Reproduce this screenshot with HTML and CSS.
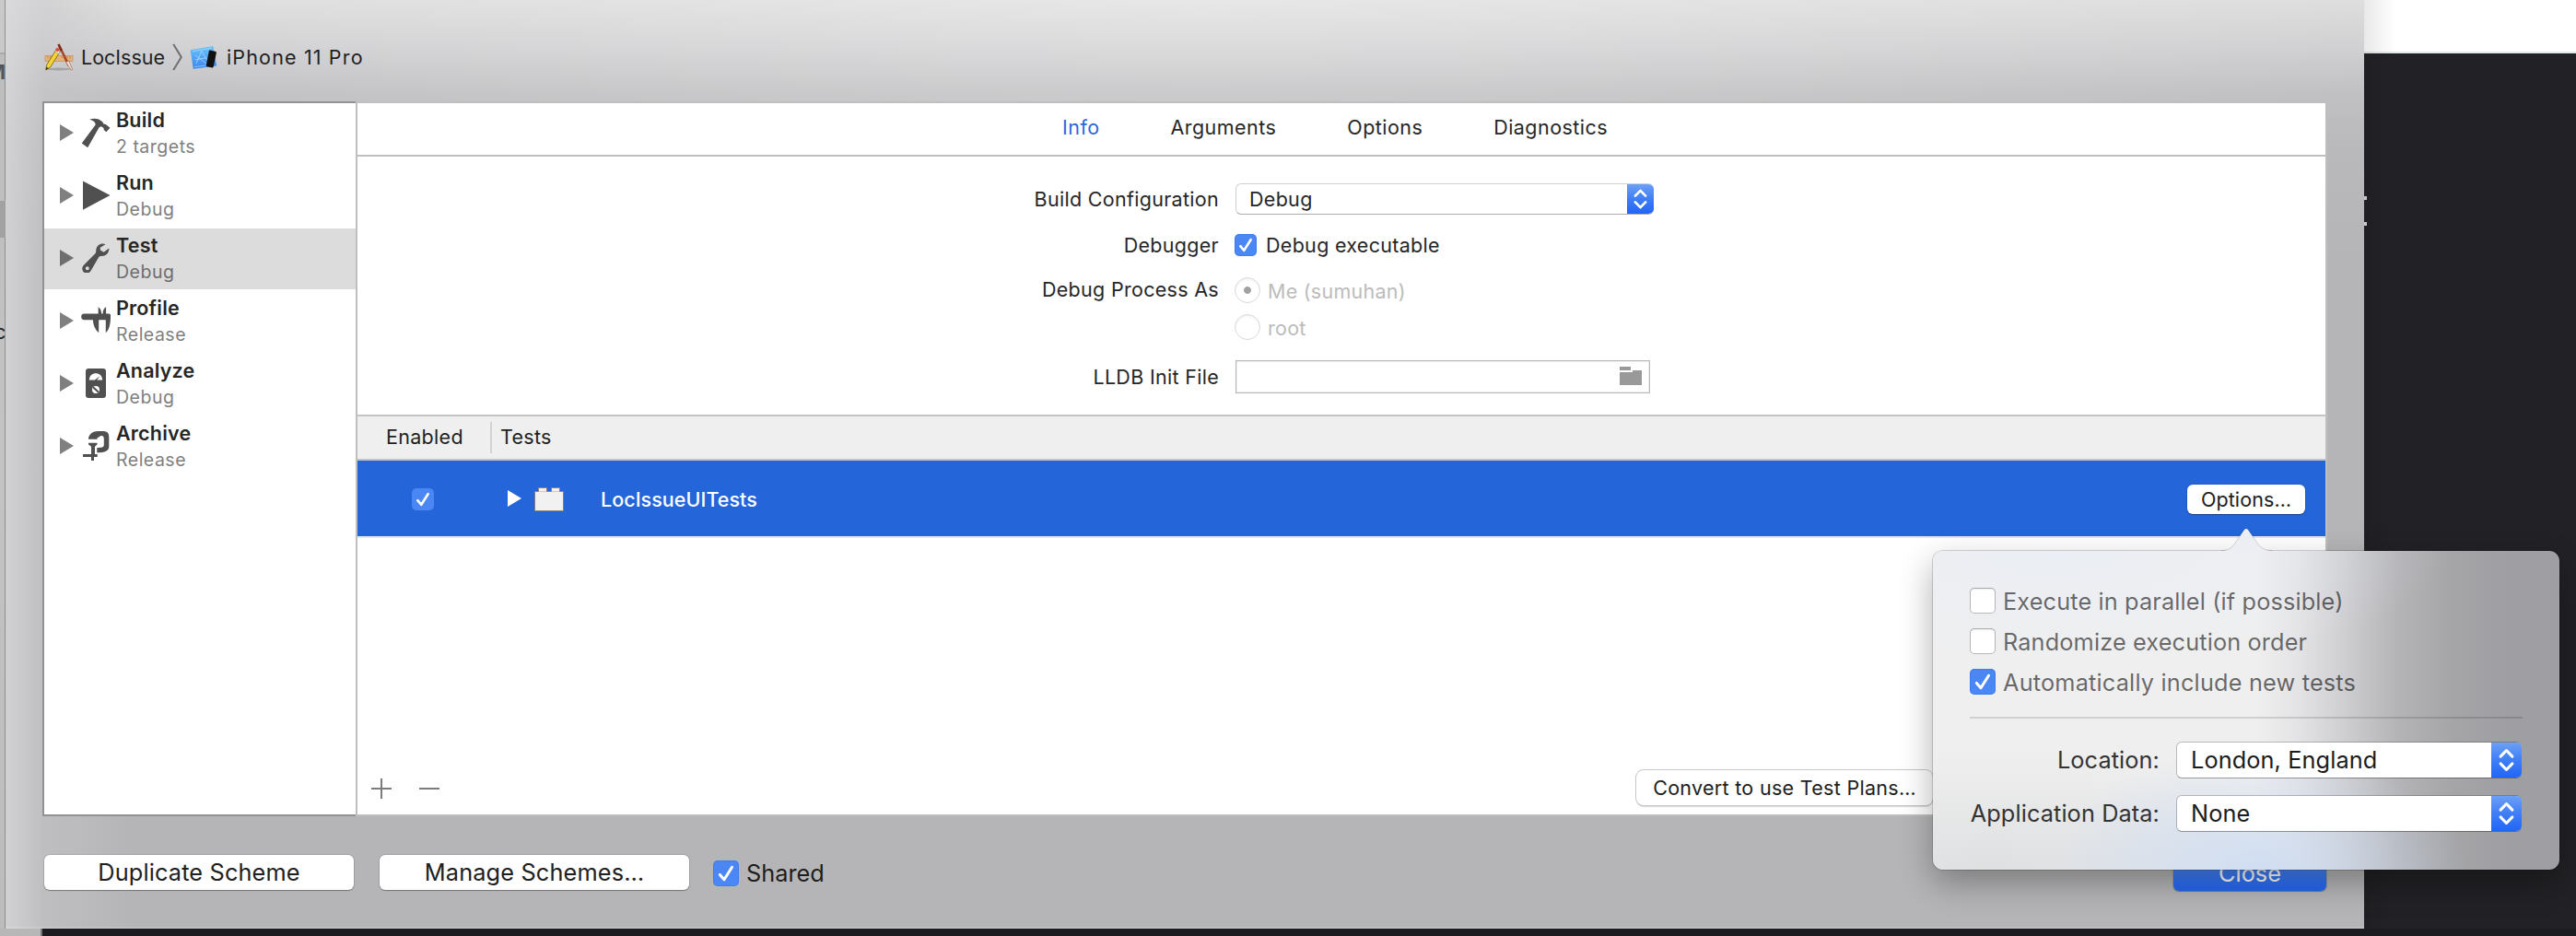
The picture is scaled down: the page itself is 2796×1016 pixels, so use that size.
FILE: index.html
```html
<!DOCTYPE html>
<html lang="en">
<head>
<meta charset="utf-8">
<title>Scheme editor</title>
<link rel="stylesheet" href="styles.css">
</head>
<body>
<svg class="defs" aria-hidden="true">
  <defs>
    <linearGradient id="blueprint" x1="0" y1="0" x2="0" y2="1"><stop offset="0" stop-color="#6cc4fb"/><stop offset="1" stop-color="#3a84ee"/></linearGradient>
  </defs>
  <symbol id="check" viewBox="0 0 24 24"><path d="M6.3 13.2l4 4.6L17.6 6.2" fill="none" stroke="#fff" stroke-width="2.6" stroke-linecap="round" stroke-linejoin="round"/></symbol>
  <symbol id="steppers" viewBox="0 0 30 34"><path d="M9.2 13.5l5.8-6 5.8 6M9.2 20.500l5.800 6 5.800-6" fill="none" stroke="#fff" stroke-width="2.800" stroke-linecap="round" stroke-linejoin="round"/></symbol>
  <symbol id="tri" viewBox="0 0 15 18"><path d="M0 0l15 9-15 9z" fill="currentColor"/></symbol>
</svg>

<div class="desktop">
  <aside class="behind-left"><span class="clip-m">M</span><i class="clip-band"></i><span class="clip-c">c</span></aside>

  <main class="sheet">
    <header class="crumbs">
      <svg class="app-icon" width="32" height="32" viewBox="0 0 32 32">
        <ellipse cx="16" cy="29" rx="13" ry="1.500" fill="#000" opacity=".18"/>
        <rect x="1" y="14.500" width="30" height="6" fill="#e6b277" stroke="#bd8a55" stroke-width=".6"/>
        <path d="M4 15v2M7 15v3M10 15v2M13 15v3M19 15v2M22 15v3M25 15v2M28 15v3" stroke="#a8743f" stroke-width=".6"/>
        <path d="M14.500 2.500l2-.9L28 24.500l-2.600 1.300z" fill="#a8452a"/>
        <path d="M14.500 2.500l2-.9 3.400 6.800-2.600 1.300z" fill="#7d3019"/>
        <path d="M23.500 21.500l3.200-1.500 4 9.500-1.600.6z" fill="#f3ddcf" stroke="#9a6a55" stroke-width=".7"/>
        <path d="M13.200 7.500l4 2.300L6.600 27 1.800 30l.6-5z" fill="#f5d432" stroke="#7c6a1d" stroke-width=".9"/>
        <path d="M13.200 7.500l4 2.300-1.500 2.500-4-2.300z" fill="#f4efe9" stroke="#888" stroke-width=".5"/>
        <circle cx="14.300" cy="8" r="1.900" fill="#e2483a"/>
        <path d="M2.300 26.500L1.800 30l3-1.800z" fill="#3b3422"/>
      </svg>
      <span class="crumb">LocIssue</span>
      <svg class="crumb-sep" width="12" height="30" viewBox="0 0 12 30"><path d="M1.200 1l8.600 14-8.600 14" fill="none" stroke="#6f6f71" stroke-width="2"/></svg>
      <svg class="sim-icon" width="30" height="27" viewBox="0 0 30 27">
        <path d="M.6 5.200L25.400 1l3.800 21.500L3.800 25.800z" fill="url(#blueprint)"/>
        <path d="M2.800 6.700L23.600 3.200M5 23.600l16-2M13 6L6.800 20.500M12.500 6.500l7.500 11M6.200 15.700l12.300-1.900M6 11l12 9" fill="none" stroke="#b9e1ff" stroke-width=".8" opacity=".8"/>
        <path d="M20.800 6.400q.3-1 1.300-.8l6 1.300q1 .3.800 1.200l-3.200 15.500q-.3 1-1.300.8l-5.800-1.200q-1-.3-.8-1.200z" fill="#111"/>
      </svg>
      <span class="crumb device">iPhone 11 Pro</span>
    </header>

    <div class="panes">
      <nav class="actions">
        <div class="action"><svg class="tri"><use href="#tri"/></svg>
          <svg class="glyph" viewBox="0 0 32 32"><path d="M9.200 1.800C14 -.3 19.500.5 23 4l1.500 2.600 2.300.3 4.700 3.900-4.200 4.400-2.600-2.300-.2-2-2.600-1.700-2.300 1L7.200 32.200.8 27.500 15.600 7.600C15.800 4.500 13 2.800 9.200 1.800z"/></svg>
          <div><b>Build</b><small>2 targets</small></div></div>
        <div class="action"><svg class="tri"><use href="#tri"/></svg>
          <svg class="glyph" viewBox="0 0 32 32"><path d="M2 .5L31.500 16 2 31.800z"/></svg>
          <div><b>Run</b><small>Debug</small></div></div>
        <div class="action selected"><svg class="tri"><use href="#tri"/></svg>
          <svg class="glyph" viewBox="0 0 32 32"><path fill-rule="evenodd" d="M26.500 1.200C22 -.8 16.800 2.200 16.300 7.200c-.1 1.500 0 2.600-.7 3.700L3.200 23.600a5 5 0 1 0 7.500 6.200L19 15.600c.7-1.200 1.800-1.500 3.200-1.500 4.800-.1 8.500-3.900 8.200-8.600l-5.900 4.200-3.600-2.200-.2-2.800zM6.800 25.200a2 2 0 1 1 0 4 2 2 0 0 1 0-4z"/></svg>
          <div><b>Test</b><small>Debug</small></div></div>
        <div class="action"><svg class="tri"><use href="#tri"/></svg>
          <svg class="glyph" viewBox="0 0 32 32"><path d="M3.500 8.500h15.200V1.300C21.200 3 22 5.500 22.100 8.500h1.500c0-3 .9-5.800 3.500-7.200v7.200h3.400q1.500 0 1.500 1.800c.2 9-1.500 16-5.200 19V15.200h-7.600v14C15.300 26 13.200 21 12.800 15.200H3.500a3.300 3.300 0 0 1 0-6.700z"/></svg>
          <div><b>Profile</b><small>Release</small></div></div>
        <div class="action"><svg class="tri"><use href="#tri"/></svg>
          <svg class="glyph" viewBox="0 0 32 32"><rect x="5" y="0" width="22" height="32" rx="3.200"/><path d="M8.800 12.600C9 2.800 23 2.800 23.200 12.600h-6l3.200-4.400-5.500 4.400z" fill="#fff"/><circle cx="16" cy="23" r="4" fill="#fff"/><path d="M13 20.200l6 5.600" stroke="#505050" stroke-width="2"/></svg>
          <div><b>Analyze</b><small>Debug</small></div></div>
        <div class="action"><svg class="tri"><use href="#tri"/></svg>
          <svg class="glyph" viewBox="0 0 32 32"><path d="M8 7.500C9 3 13 0 18 0h6.500Q30.300 0 30.300 6v10.500c0 5-4.300 6.800-13 6.800V18c5 0 7.500-.6 7.500-3V8.500Q24.800 4.500 21 5.200l-3.500 2.300v1.300H8zM8 12.800h9.500v1.700l-2.500 2.300V25h2.700v3H14v4h-3v-4H2v-3h9v-8.200L8 14.500z"/></svg>
          <div><b>Archive</b><small>Release</small></div></div>
      </nav>

      <section class="detail">
        <div class="tabs"><span class="on">Info</span><span>Arguments</span><span>Options</span><span>Diagnostics</span></div>

        <div class="form">
          <div class="row r1"><label>Build Configuration</label><div class="popup"><span>Debug</span><svg viewBox="0 0 30 34"><use href="#steppers"/></svg></div></div>
          <div class="row r2"><label>Debugger</label><i class="box checked"><svg viewBox="0 0 24 24"><use href="#check"/></svg></i><span class="opt">Debug executable</span></div>
          <div class="row r3"><label>Debug Process As</label><i class="radio dot"></i><span class="opt dim">Me (sumuhan)</span></div>
          <div class="row r4"><label></label><i class="radio"></i><span class="opt dim">root</span></div>
          <div class="row r5"><label>LLDB Init File</label><div class="field"><svg width="24" height="20" viewBox="0 0 24 20"><path d="M0 0h12v4H0zM14 4h10v16H0V6h14z" fill="#999"/></svg></div></div>
        </div>

        <div class="thead"><span class="c1">Enabled</span><span class="c2">Tests</span></div>
        <div class="test">
          <i class="box checked soft"><svg viewBox="0 0 24 24"><use href="#check"/></svg></i>
          <svg class="tri"><use href="#tri"/></svg>
          <svg class="brick" width="32" height="26" viewBox="0 0 32 26"><path d="M.5 25.500v-21h4v-4h9v4h5v-4h9v4h4v21z" fill="#f1f1f1" stroke="#8b8178"/><path d="M5 4.500h8M19 4.500h8" stroke="#ccc"/></svg>
          <span class="name">LocIssueUITests</span>
          <button class="push mini">Options…</button>
        </div>

        <div class="tools">
          <svg width="80" height="24" viewBox="0 0 80 24"><path d="M0 12h22M11 1v22M52 12h22" stroke="#7c7c7c" stroke-width="2"/></svg>
          <button class="push outline">Convert to use Test Plans…</button>
        </div>
      </section>
    </div>

    <footer class="foot">
      <button class="push wide">Duplicate Scheme</button>
      <button class="push wide">Manage Schemes…</button>
      <i class="box checked big"><svg viewBox="0 0 24 24"><use href="#check"/></svg></i><span class="shared">Shared</span>
      <button class="push close">Close</button>
    </footer>
  </main>

  <aside class="behind-right"><i class="speck"></i><i class="speck"></i></aside>
</div>
<div class="below"></div>

<div class="popover">
  <svg class="arrow" width="56" height="26" viewBox="0 0 56 26"><path d="M0 25C9 25 12 21 16 15L24.500 2.500Q27 -.8 29.500 2.500L38 15c4 6 8 10 17 10v1H0z" fill="#eceef3"/><path d="M0 24.500C9 24.500 12 21 16 15L24.500 2.500Q27 -.8 29.500 2.500L38 15c4 6 8 9.500 17 9.500" fill="none" stroke="#000" stroke-opacity=".15"/></svg>
  <div class="line"><i class="box big"></i><span>Execute in parallel (if possible)</span></div>
  <div class="line"><i class="box big"></i><span>Randomize execution order</span></div>
  <div class="line"><i class="box checked big"><svg viewBox="0 0 24 24"><use href="#check"/></svg></i><span class="auto">Automatically include new tests</span></div>
  <hr>
  <div class="pick"><label>Location:</label><div class="popup large"><span>London, England</span><svg viewBox="0 0 30 34"><use href="#steppers"/></svg></div></div>
  <div class="pick"><label>Application Data:</label><div class="popup large"><span>None</span><svg viewBox="0 0 30 34"><use href="#steppers"/></svg></div></div>
</div>
</body>
</html>
```
FILE: styles.css
```css
* { box-sizing: border-box; }
body {
  margin: 0;
  width: 2796px;
  height: 1016px;
  overflow: hidden;
  position: relative;
  font: 400 21.5px/30px Inter, "Liberation Sans", sans-serif;
  letter-spacing: .3px;
  color: #262626;
  background: #222125;
  white-space: nowrap;
}
.defs { position: absolute; width: 0; height: 0; }
i { display: block; flex: none; }
svg { display: block; flex: none; }

.desktop { display: flex; height: 1008px; }

/* slivers of the windows behind the sheet */
.behind-left {
  width: 6px;
  overflow: hidden;
  display: flex;
  flex-direction: column;
  background: linear-gradient(#c9c9c9 0 57px, #aaa 57px 59px, #bdbdbd 59px, #c3c3c3 500px, #bcbcbc);
  box-shadow: inset -1px 0 #8f8f8f;
}
.clip-m { height: 30px; margin: 63px 0 0 -14px; font-weight: 700; color: #555; }
.clip-band { height: 40px; margin-top: 125px; background: #a2a2a2; }
.clip-c { height: 30px; margin: 87px 0 0 -6px; color: #222; }
.behind-right {
  flex: 1;
  background:
    linear-gradient(90deg, rgba(0,0,0,.09), rgba(0,0,0,0) 34px),
    linear-gradient(#fff 0 56px, #e5e8e8 56px 58px, #222125 58px);
}
.speck { width: 3px; height: 4px; margin-top: 213px; background: #c8c8ca; }
.speck + .speck { margin-top: 24px; }
.below { height: 8px; background: linear-gradient(90deg, #b7b7b7 0 44px, #777 44px 46px, #1c1b1f 46px); }

.sheet {
  width: 2560px;
  display: flex;
  flex-direction: column;
  background:
    linear-gradient(90deg, rgba(216,216,218,.8), rgba(200,200,203,.5) 42px, rgba(190,190,192,0) 140px),
    radial-gradient(ellipse 1400px 220px at 1300px 0, rgba(255,255,255,.3), rgba(255,255,255,0)),
    linear-gradient(#dddddd, #d0d0d2 50px, #c1c1c3 100px, #b9b9bb 160px, #b5b5b7 300px, #b5b5b7);
  box-shadow: inset 0 -2px rgba(255,255,255,.14);
}

.crumbs { height: 110px; padding: 46px 0 0 42px; display: flex; align-items: flex-start; }
.crumb { margin: 1px 0 0 8px; width: 91px; letter-spacing: 0; color: #1f1f1f; }
.crumb-sep { margin: 1px 0 0 8px; }
.sim-icon { margin: 3px 0 0 7px; }
.crumb.device { margin-left: 10px; width: auto; letter-spacing: 1.150px; }

.panes { display: flex; height: 776px; margin-left: 40px; width: 2480px; }
.actions {
  width: 340px;
  background: #fff;
  border: 2px solid #929294;
  border-right: 0;
}
.action { display: flex; height: 66px; margin-bottom: 2px; padding: 4px 0 0 17px; color: #262626; }
.action .glyph { width: 32px; height: 32px; margin: 12px 6px 0 8px; fill: #505050; }
.action .tri { margin-top: 19px; color: #808080; }
.tri { width: 15px; height: 18px; }
.action b, .action small { display: block; line-height: 28px; height: 28px; }
.action b { font-weight: 600; letter-spacing: .2px; }
.action small { margin-top: 1px; font-size: 19.500px; letter-spacing: .5px; color: #808080; }
.action.selected { background: #dcdcdc; }
.action.selected .tri, .action.selected small { color: #6e6e6e; }

.detail {
  flex: 1;
  display: flex;
  flex-direction: column;
  background: #fff;
  border: 2px solid #bfbfbf;
}
.tabs { height: 58px; border-bottom: 2px solid #bfbfbf; display: flex; gap: 77px; padding: 11px 0 0 765px; letter-spacing: .450px; }
.tabs .on { color: #2a68dc; }

.form { height: 280px; padding-top: 29px; }
.row { display: flex; align-items: center; height: 32px; }
.row label { width: 935px; text-align: right; margin-right: 17px; }
.r1 { height: 34px; }
.r2 { margin-top: 17px; }
.r3 { margin-top: 17px; }
.r3 label { margin-top: -2px; }
.r4 { margin-top: 8px; }
.r5 { margin-top: 20px; height: 36px; }
.opt { margin-left: 10px; }
.opt.dim { color: #bcbcbc; margin: 2px 0 0 8px; letter-spacing: .25px; }

.popup {
  width: 454px;
  height: 34px;
  display: flex;
  align-items: center;
  padding-left: 14px;
  border-radius: 6px;
  background: #fff;
  overflow: hidden;
  border: 1px solid #cfcfcf;
  border-bottom-color: #adadad;
  border-right: 0;
}
.popup svg { width: 29px; height: 34px; margin-left: auto; background: linear-gradient(#6fa2f6, #3f7ef6 50%, #1f64f6); }
.row .popup { margin-left: 1px; }
.popup.large { width: 375px; height: 40px; font-size: 25.300px; letter-spacing: .1px; padding-left: 15px; color: #1c1c1c; border-color: rgba(0,0,0,.22); border-bottom-color: rgba(0,0,0,.35); background-clip: padding-box; }
.popup.large svg { width: 33px; height: 40px; }

.box {
  width: 24px;
  height: 24px;
  border-radius: 5px;
  background: #fff;
  box-shadow: inset 0 0 0 1px rgba(0,0,0,.28), inset 0 2px 2px rgba(0,0,0,.08);
}
.box svg { width: 100%; height: 100%; }
.box.big { width: 28px; height: 28px; }
.box.checked { background: linear-gradient(#4b86f1, #4a87f8); box-shadow: inset 0 0 0 1px rgba(40,100,220,.3); }
.box.soft { background: #4a87f5; box-shadow: none; }

.radio { width: 28px; height: 28px; border-radius: 50%; border: 1.500px solid #d9d9d9; box-shadow: inset 0 2px 2px rgba(0,0,0,.05); }
.radio.dot { background: radial-gradient(circle, #a2a2a2 0 3.500px, rgba(255,255,255,0) 4.300px); }

.field { width: 450px; height: 36px; margin-left: 1px; border: 1px solid #b9b9b9; box-shadow: inset 0 0 0 1px #ececec; display: flex; justify-content: flex-end; padding: 6px 8px 0 0; }

.thead { height: 50px; border: 2px solid #c4c4c4; border-width: 2px 0; background: #efefef; display: flex; align-items: center; color: #1f1f1f; }
.thead .c1 { width: 146px; height: 34px; line-height: 33px; padding-left: 31px; border-right: 2px solid #d2d2d2; }
.thead .c2 { height: 34px; line-height: 33px; padding-left: 9px; }

.test { height: 84px; background: #2465da; border-bottom: 2px solid #e6e6e6; display: flex; align-items: center; padding: 2px 22px 0 59px; color: #fff; }
.test .tri { margin: -2px 14px 0 80px; }
.test .name { margin: 0 auto 0 40px; font-weight: 500; letter-spacing: .050px; }

.push {
  appearance: none;
  border: 0;
  padding: 0;
  font: inherit;
  letter-spacing: .3px;
  color: #202020;
  background: #fff;
  border-radius: 6px;
  box-shadow: 0 1px 1px rgba(0,0,0,.28), 0 0 0 1px rgba(0,0,0,.1);
}
.push.mini { width: 128px; height: 32px; letter-spacing: .1px; }
.push.outline { width: 322px; height: 38px; border-radius: 8px; box-shadow: 0 0 0 1px #c6c6c6, 0 2px 1px rgba(0,0,0,.16); }

.tools { flex: 1; display: flex; align-items: flex-end; padding: 0 426px 10px 15px; }
.tools svg { margin-bottom: 6px; }
.tools .push { margin-left: auto; }

.foot { flex: 1; display: flex; align-items: flex-start; padding: 42px 41px 0 42px; font-size: 25.300px; letter-spacing: .1px; }
.push.wide { width: 336px; height: 38px; margin-right: 28px; letter-spacing: .15px; }
.foot .box { margin: 6px 0 0 -2px; }
.shared { margin: 5px 0 0 8px; letter-spacing: 0; color: #1d1d1d; }
.push.close { width: 166px; height: 39px; margin-left: auto; letter-spacing: 0; color: #fff; background: linear-gradient(#6fa2f6, #3f7ef6 50%, #1f64f6); }

/* popover anchored to the Options… button */
.popover {
  position: absolute;
  left: 2098px;
  top: 598px;
  width: 680px;
  height: 346px;
  padding: 40px 40px 0;
  border-radius: 11px;
  font-size: 25.300px;
  background:
    radial-gradient(ellipse 230px 130px at 350px 346px, rgba(200,218,245,.75), rgba(200,218,245,0)),
    radial-gradient(ellipse 430px 130px at 130px 0, rgba(232,238,250,.5), rgba(232,238,250,0)),
    radial-gradient(ellipse 480px 130px at 60px 346px, rgba(212,214,216,.6), rgba(212,214,216,0)),
    linear-gradient(90deg, #efefef 0 350px, #e4e4e6 395px, #cfcfd2 445px, #b4b4b7 505px, #a5a5a8 565px, #9f9fa3 620px);
  box-shadow: 0 0 0 1px rgba(0,0,0,.16), 0 14px 36px rgba(0,0,0,.32);
}
.arrow { position: absolute; left: 313px; top: -25px; }
.line { display: flex; align-items: center; height: 28px; margin-bottom: 16px; color: rgba(0,0,0,.58); }
.line span { margin: 1px 0 0 8px; letter-spacing: .13px; line-height: 30px; }
.line .auto { letter-spacing: .18px; }
.popover hr { border: 0; height: 2px; margin: 24px 0 25px; background: rgba(0,0,0,.13); }
.pick { display: flex; align-items: center; height: 40px; margin-bottom: 18px; }
.pick label { width: 206px; text-align: right; margin-right: 18px; letter-spacing: .1px; color: #333; }
```
